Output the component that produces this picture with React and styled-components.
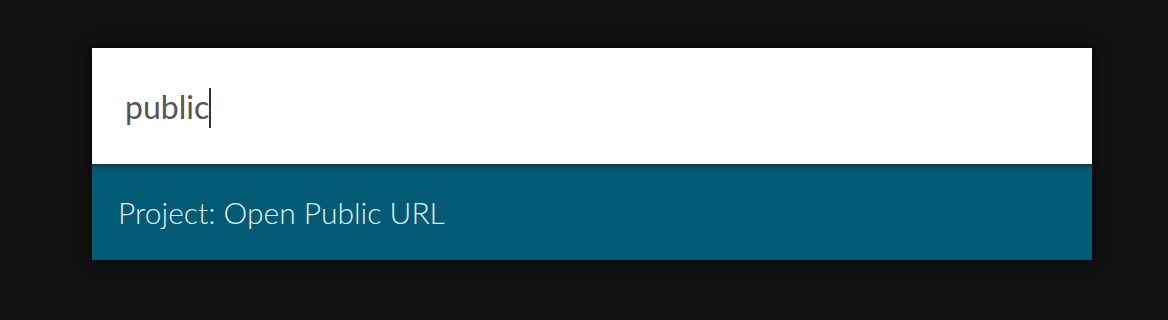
import React from 'react';
import styled, { createGlobalStyle } from 'styled-components';

const GlobalStyle = createGlobalStyle`
  html, body {
    margin: 0;
    padding: 0;
    background: #111111;
  }
  body {
    font-family: Lato, "Liberation Sans", sans-serif;
  }
`;

const Page = styled.div`
  width: 1168px;
  height: 320px;
  padding: 48px 0 0 92px;
  box-sizing: border-box;
`;

const Palette = styled.div`
  width: 1000px;
  display: flex;
  flex-direction: column;
  box-shadow: 0 0 12px rgba(0, 0, 0, 0.55);
`;

const Field = styled.div`
  position: relative;
  z-index: 1;
  height: 116px;
  background: #ffffff;
  display: flex;
  align-items: center;
  padding-left: 33px;
  box-shadow: 0 2px 5px rgba(0, 0, 0, 0.45);
`;

const Query = styled.span`
  font-size: 32px;
  color: #555555;
`;

const Caret = styled.span`
  display: inline-block;
  width: 1.5px;
  height: 40px;
  background: #333333;
  transform: translateY(2px);
`;

const Results = styled.ul`
  list-style: none;
  margin: 0;
  padding: 0;
`;

const Item = styled.li`
  height: 96px;
  display: flex;
  align-items: center;
  padding-left: 26px;
  background: ${(p) => (p.active ? '#025a75' : '#ffffff')};
  color: ${(p) => (p.active ? '#e6eef1' : '#555555')};
  font-size: 30px;
  font-weight: 300;
`;

export default function App() {
  return (
    <>
      <GlobalStyle />
      <Page>
        <Palette>
          <Field>
            <Query>public</Query>
            <Caret />
          </Field>
          <Results>
            <Item active>Project: Open Public URL</Item>
          </Results>
        </Palette>
      </Page>
    </>
  );
}
